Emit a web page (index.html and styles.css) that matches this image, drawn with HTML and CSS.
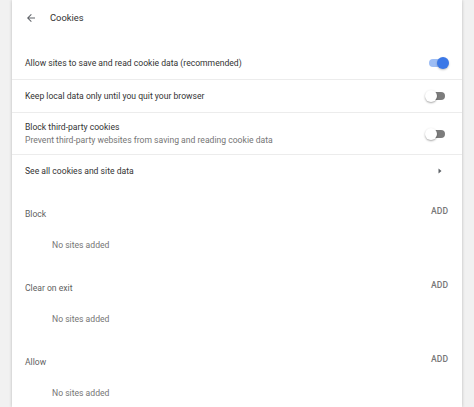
FILE: index.html
```html
<!DOCTYPE html>
<html>
<head>
<meta charset="utf-8">
<link rel="stylesheet" href="styles.css">
</head>
<body>
<div class="page">
  <div class="card">
    <div class="header">
      <svg class="back" width="12" height="12" viewBox="0 0 24 24"><path d="M20 11H7.83l5.59-5.59L12 4l-8 8 8 8 1.41-1.41L7.83 13H20v-2z" fill="#5f6368"/></svg>
      <span class="title">Cookies</span>
    </div>
    <div class="rows">
      <div class="row r1">
        <span class="label">Allow sites to save and read cookie data (recommended)</span>
        <span class="toggle on"><span class="knob"></span></span>
      </div>
      <div class="row">
        <span class="label">Keep local data only until you quit your browser</span>
        <span class="toggle"><span class="knob"></span></span>
      </div>
      <div class="row two">
        <div class="texts">
          <span class="label">Block third-party cookies</span>
          <span class="sub">Prevent third-party websites from saving and reading cookie data</span>
        </div>
        <span class="toggle"><span class="knob"></span></span>
      </div>
      <div class="row">
        <span class="label">See all cookies and site data</span>
        <svg class="arrow" width="6" height="8" viewBox="0 0 6 8"><path d="M1.5 1.5 L4.5 4 L1.5 6.5 Z" fill="#5f6368"/></svg>
      </div>
    </div>
    <div class="section">
      <div class="sec-head"><span class="sec-title">Block</span><span class="add">ADD</span></div>
      <div class="empty">No sites added</div>
    </div>
    <div class="section">
      <div class="sec-head"><span class="sec-title">Clear on exit</span><span class="add">ADD</span></div>
      <div class="empty">No sites added</div>
    </div>
    <div class="section">
      <div class="sec-head"><span class="sec-title">Allow</span><span class="add">ADD</span></div>
      <div class="empty">No sites added</div>
    </div>
  </div>
</div>
</body>
</html>
```
FILE: styles.css
```css
html, body {
  margin: 0;
  padding: 0;
  background: #f1f1f1;
  font-family: Roboto, "Liberation Sans", Arial, sans-serif;
  font-size: 8.6px;
  color: #333;
  overflow: hidden;
}
.page {
  height: 407px;
  padding: 0 12px;
}
.card {
  background: #fff;
  height: 407px;
  box-shadow: 0 0 3px rgba(0,0,0,0.18), 0 1px 4px rgba(0,0,0,0.06);
}
.header {
  height: 35px;
  display: flex;
  align-items: center;
  padding-left: 13px;
}
.back {
  display: block;
}
.title {
  margin-left: 13px;
  font-size: 9.4px;
  color: #333;
}
.rows {
  margin-top: 11px;
}
.row {
  height: 33px;
  display: flex;
  align-items: center;
  justify-content: space-between;
  padding: 0 15px 0 13px;
  border-top: 1px solid #ececec;
  box-sizing: border-box;
}
.row.r1 {
  border-top: none;
  height: 33px;
}
.row.two {
  height: 42px;
}
.texts {
  display: flex;
  flex-direction: column;
  gap: 3px;
}
.label {
  color: #333;
}
.sub {
  color: #757575;
}
.toggle {
  position: relative;
  width: 16px;
  height: 8px;
  border-radius: 4px;
  background: #7c7c7c;
  margin-right: 2px;
}
.toggle .knob {
  position: absolute;
  top: -2px;
  left: -4px;
  width: 12px;
  height: 12px;
  border-radius: 50%;
  background: #fff;
  box-shadow: 0 1px 2px rgba(0,0,0,0.35);
}
.toggle.on {
  background: #9dbdf4;
}
.toggle.on .knob {
  left: 8px;
  background: #3b78e7;
  box-shadow: 0 1px 2px rgba(0,0,0,0.25);
}
.arrow {
  display: block;
  margin-right: 4px;
}
.section {
  height: 74px;
  box-sizing: border-box;
}
.rows + .section {
  padding-top: 17px;
  height: 91px;
}
.sec-head {
  display: flex;
  justify-content: space-between;
  align-items: flex-start;
  padding: 0 14px 0 13px;
  height: 20px;
}
.sec-title {
  color: #5f5f5f;
  margin-top: 5px;
}
.add {
  color: #777;
  font-size: 8.6px;
  font-weight: 500;
  margin-top: 2px;
}
.empty {
  margin-top: 16px;
  padding-left: 40px;
  color: #757575;
}
```
